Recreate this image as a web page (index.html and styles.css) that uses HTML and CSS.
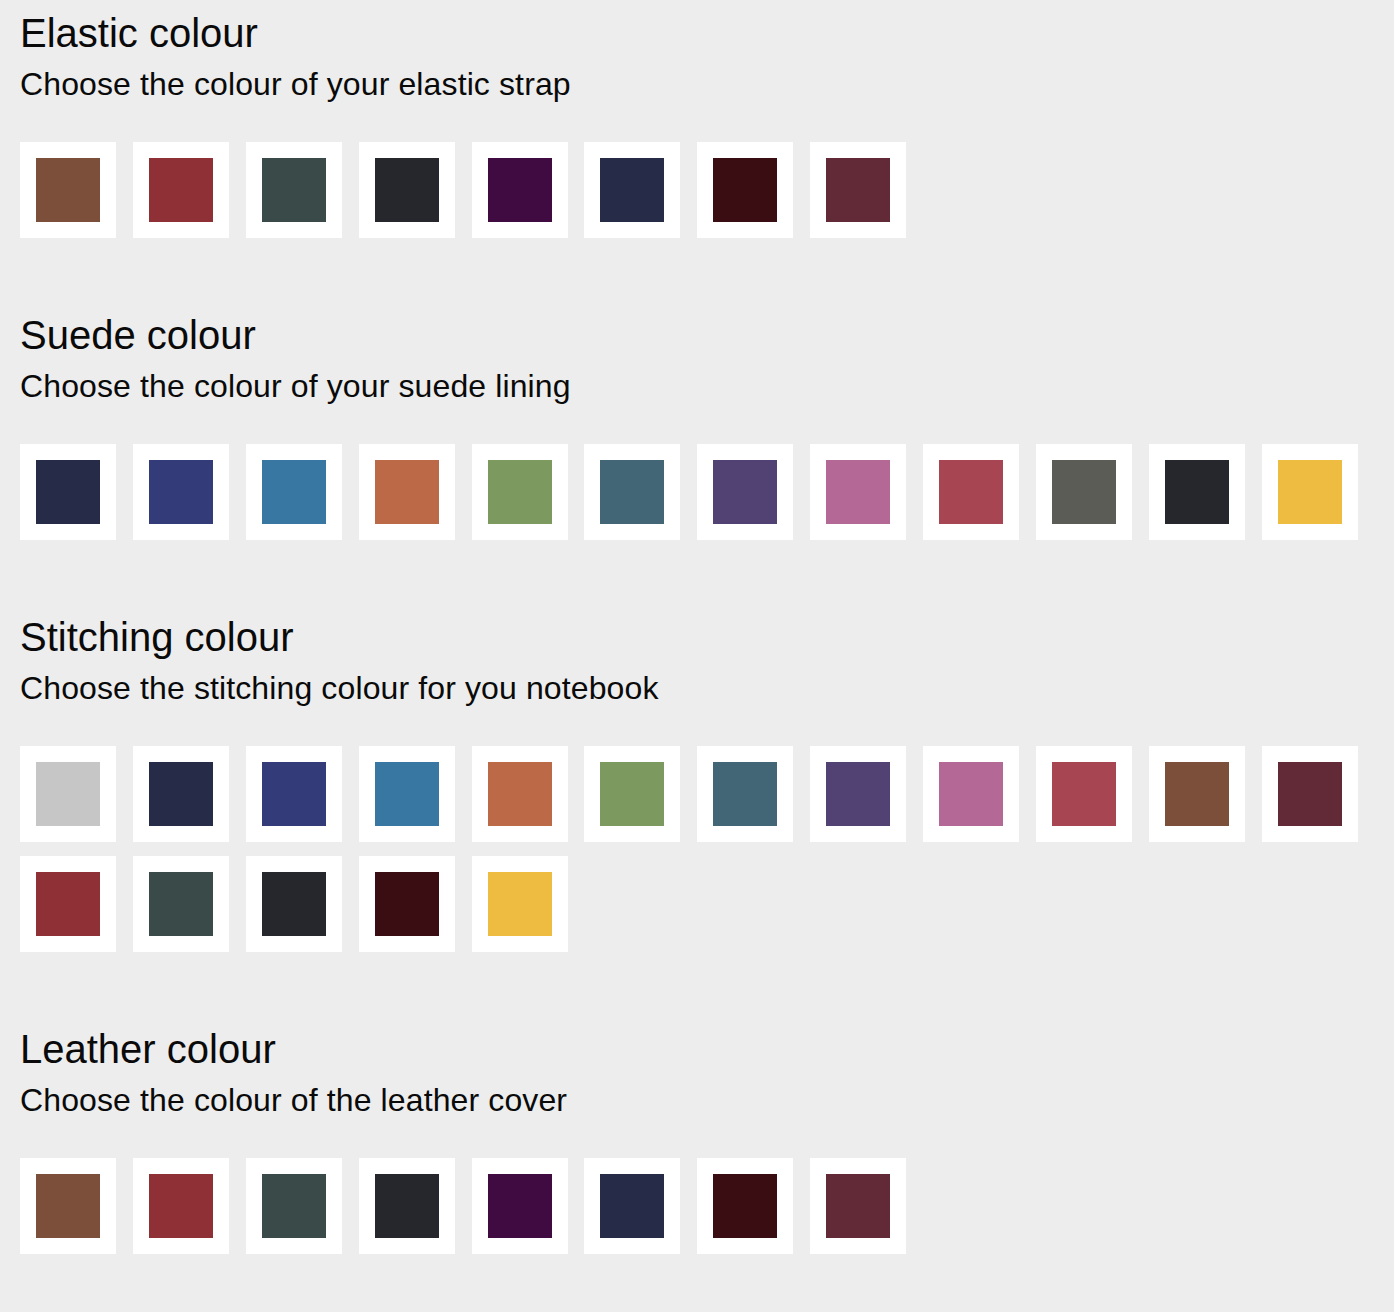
FILE: index.html
```html
<!DOCTYPE html>
<html lang="en">
<head>
<meta charset="utf-8">
<title>Customise your notebook</title>
<link rel="stylesheet" href="styles.css">
</head>
<body>
<main class="options">
  <section class="option">
    <h2 class="option-title">Elastic colour</h2>
    <p class="option-desc">Choose the colour of your elastic strap</p>
    <ul class="swatches">
      <li class="swatch"><span class="chip c-brown"></span></li>
      <li class="swatch"><span class="chip c-red"></span></li>
      <li class="swatch"><span class="chip c-slate"></span></li>
      <li class="swatch"><span class="chip c-black"></span></li>
      <li class="swatch"><span class="chip c-purple"></span></li>
      <li class="swatch"><span class="chip c-navy"></span></li>
      <li class="swatch"><span class="chip c-maroon"></span></li>
      <li class="swatch"><span class="chip c-wine"></span></li>
    </ul>
  </section>

  <section class="option">
    <h2 class="option-title">Suede colour</h2>
    <p class="option-desc">Choose the colour of your suede lining</p>
    <ul class="swatches">
      <li class="swatch"><span class="chip c-navy"></span></li>
      <li class="swatch"><span class="chip c-royal"></span></li>
      <li class="swatch"><span class="chip c-blue"></span></li>
      <li class="swatch"><span class="chip c-orange"></span></li>
      <li class="swatch"><span class="chip c-green"></span></li>
      <li class="swatch"><span class="chip c-teal"></span></li>
      <li class="swatch"><span class="chip c-violet"></span></li>
      <li class="swatch"><span class="chip c-pink"></span></li>
      <li class="swatch"><span class="chip c-rose"></span></li>
      <li class="swatch"><span class="chip c-grey"></span></li>
      <li class="swatch"><span class="chip c-black"></span></li>
      <li class="swatch"><span class="chip c-yellow"></span></li>
    </ul>
  </section>

  <section class="option">
    <h2 class="option-title">Stitching colour</h2>
    <p class="option-desc">Choose the stitching colour for you notebook</p>
    <ul class="swatches">
      <li class="swatch"><span class="chip c-silver"></span></li>
      <li class="swatch"><span class="chip c-navy"></span></li>
      <li class="swatch"><span class="chip c-royal"></span></li>
      <li class="swatch"><span class="chip c-blue"></span></li>
      <li class="swatch"><span class="chip c-orange"></span></li>
      <li class="swatch"><span class="chip c-green"></span></li>
      <li class="swatch"><span class="chip c-teal"></span></li>
      <li class="swatch"><span class="chip c-violet"></span></li>
      <li class="swatch"><span class="chip c-pink"></span></li>
      <li class="swatch"><span class="chip c-rose"></span></li>
      <li class="swatch"><span class="chip c-brown"></span></li>
      <li class="swatch"><span class="chip c-wine"></span></li>
      <li class="swatch"><span class="chip c-red"></span></li>
      <li class="swatch"><span class="chip c-slate"></span></li>
      <li class="swatch"><span class="chip c-black"></span></li>
      <li class="swatch"><span class="chip c-maroon"></span></li>
      <li class="swatch"><span class="chip c-yellow"></span></li>
    </ul>
  </section>

  <section class="option">
    <h2 class="option-title">Leather colour</h2>
    <p class="option-desc">Choose the colour of the leather cover</p>
    <ul class="swatches">
      <li class="swatch"><span class="chip c-brown"></span></li>
      <li class="swatch"><span class="chip c-red"></span></li>
      <li class="swatch"><span class="chip c-slate"></span></li>
      <li class="swatch"><span class="chip c-black"></span></li>
      <li class="swatch"><span class="chip c-purple"></span></li>
      <li class="swatch"><span class="chip c-navy"></span></li>
      <li class="swatch"><span class="chip c-maroon"></span></li>
      <li class="swatch"><span class="chip c-wine"></span></li>
    </ul>
  </section>
</main>
</body>
</html>
```

FILE: styles.css
```css
html, body {
  margin: 0;
  padding: 0;
  background: #ededed;
}

body {
  font-family: "Liberation Sans", Arial, Helvetica, sans-serif;
  color: #0a0a0a;
}

.options {
  padding: 10px 20px 40px;
  display: flex;
  flex-direction: column;
  gap: 74px;
}

.option-title {
  margin: 0;
  font-size: 40px;
  line-height: 46px;
  font-weight: 400;
}

.option-desc {
  margin: 10px 0 0;
  font-size: 32px;
  line-height: 37px;
  font-weight: 400;
  letter-spacing: 0.12px;
}

.swatches {
  list-style: none;
  margin: 39px 0 0;
  padding: 0;
  display: flex;
  flex-wrap: wrap;
  column-gap: 16.9px;
  row-gap: 14px;
}

.swatch {
  width: 96px;
  height: 96px;
  box-sizing: border-box;
  padding: 16px;
  background: #fff;
}

.chip {
  display: block;
  width: 64px;
  height: 64px;
}

/* palette */
.c-brown  { background: #7b4f39; }
.c-red    { background: #8f2f36; }
.c-slate  { background: #3a4a49; }
.c-black  { background: #26272c; }
.c-purple { background: #3f0b40; }
.c-navy   { background: #262b48; }
.c-maroon { background: #3a0d12; }
.c-wine   { background: #622a37; }
.c-royal  { background: #333c78; }
.c-blue   { background: #3977a3; }
.c-orange { background: #bb6947; }
.c-green  { background: #7c9960; }
.c-teal   { background: #426676; }
.c-violet { background: #524274; }
.c-pink   { background: #b36895; }
.c-rose   { background: #a84553; }
.c-grey   { background: #5b5c56; }
.c-yellow { background: #eebc41; }
.c-silver { background: #c6c6c6; }
```
